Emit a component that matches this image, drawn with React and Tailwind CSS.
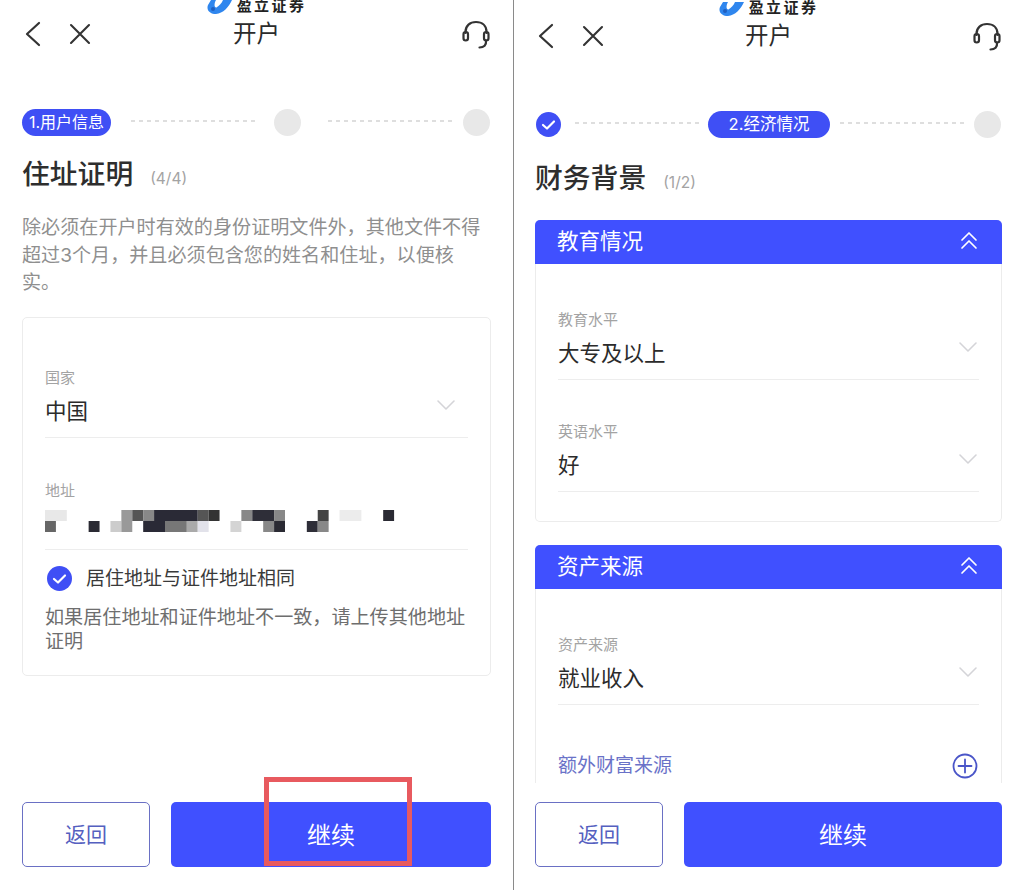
import React from 'react';

const FONT = "font-['Inter','Noto_Sans_CJK_SC',sans-serif]";

// Logo cortado por el borde superior de la captura
const Logo = ({ alto = 'h-[14px]' }) => (
  <div className={`${alto} flex items-end justify-center gap-[5px] overflow-hidden`}>
    <svg width="25" height="14" viewBox="0 0 25 14" className="shrink-0">
      <path d="M4 0 L1 5 C-1 10 3 14.5 9 14 C16 13.5 22 7 25 0 Z" fill="#2f86ee" />
      <path d="M9 0 L16 0 C15 3 12 6 9.5 7.5 C7 8 7 3 9 0 Z" fill="#fff" />
      <circle cx="6" cy="9" r="2" fill="#1f5fc0" />
    </svg>
    <span className="text-[15px] leading-[15px] font-semibold tracking-[2.4px] text-[#222] -translate-y-[1px]">盈立证券</span>
  </div>
);

const Header = () => (
  <div className="h-[40px] flex items-center justify-between px-[22px] relative">
    <div className="flex items-center gap-[24px]">
      <svg width="22" height="28" viewBox="0 0 22 28" fill="none" stroke="#333" strokeWidth="2.2" strokeLinecap="round" strokeLinejoin="round">
        <path d="M17 3 L5 14 L17 25" />
      </svg>
      <svg width="24" height="24" viewBox="0 0 24 24" fill="none" stroke="#333" strokeWidth="2.1" strokeLinecap="round">
        <path d="M3 3 L21 21 M21 3 L3 21" />
      </svg>
    </div>
    <span className="text-[23.5px] text-[#2b2b2b] absolute left-0 right-0 text-center pointer-events-none">开户</span>
    <svg width="30" height="30" viewBox="0 0 30 30" fill="none" stroke="#333" strokeWidth="2.2" strokeLinecap="round" className="translate-y-[1px]">
      <path d="M4.5 13 V12 C4.5 5.5 9 2 15 2 C21 2 25.5 5.5 25.5 12 V13" />
      <rect x="2.5" y="12" width="4.5" height="8.5" rx="2.2" />
      <rect x="23" y="12" width="4.5" height="8.5" rx="2.2" />
      <path d="M25 20.5 C25.5 25 23 27.5 18.5 27.5" />
    </svg>
  </div>
);

const Dots = ({ ancho }) => (
  <div className={`h-[2px] bg-[repeating-linear-gradient(90deg,#dedede_0_4px,transparent_4px_8px)] self-start mt-[11px] ${ancho}`} />
);

const CheckCircle = ({ clase = '' }) => (
  <svg viewBox="0 0 25 25" className={`w-[25px] h-[25px] shrink-0 ${clase}`}>
    <circle cx="12.5" cy="12.5" r="12.5" fill="#3f4ff5" />
    <path d="M7 13 L11 16.5 L18 9.5" fill="none" stroke="#fff" strokeWidth="2.2" strokeLinecap="round" strokeLinejoin="round" />
  </svg>
);

const Chevron = () => (
  <svg width="20" height="12" viewBox="0 0 20 12" fill="none" stroke="#d4d4d8" strokeWidth="1.6" strokeLinecap="round" strokeLinejoin="round">
    <path d="M2 2 L10 10 L18 2" />
  </svg>
);

const DoubleUp = () => (
  <svg width="18" height="20" viewBox="0 0 18 20" fill="none" stroke="#fff" strokeWidth="1.7" strokeLinecap="round" strokeLinejoin="round">
    <path d="M2 9 L9 2 L16 9 M2 17 L9 10 L16 17" />
  </svg>
);

const Campo = ({ label, value, mt = 'mt-0', derecha = 'right-[1px]' }) => (
  <div className={`${mt} border-b border-[#ededed] h-[71px] flex flex-col relative`}>
    <span className="text-[15px] leading-[20px] text-[#a3a3a3] mt-[1px]">{label}</span>
    <span className="text-[21.5px] leading-[30px] text-[#2b2b2b] mt-[8px]">{value}</span>
    <div className={`absolute top-[32px] ${derecha}`}><Chevron /></div>
  </div>
);

const Titulo = ({ texto, paso, mt }) => (
  <div className={`flex items-baseline gap-[17px] ${mt}`}>
    <h1 className="text-[27.8px] leading-[38px] font-medium text-[#2e2e2e]">{texto}</h1>
    <span className="text-[15.5px] text-[#a3a3a3]">{paso}</span>
  </div>
);

const Footer = () => (
  <div className="h-[65px] shrink-0 flex gap-[21px] px-[22px]">
    <button className="w-[128px] rounded-[5px] border border-[#6a70c4] bg-white text-[21px] text-[#5560c0]">返回</button>
    <button className="flex-1 rounded-[5px] bg-[#4050ff] pt-[2px] text-[24px] text-white">继续</button>
  </div>
);

// Dirección pixelada: es una mancha, no texto
const Pixelado = () => {
  const celdas = [
    [0, 0, 2, '#e8e8e8'], [7, 0, 1, '#999'], [8, 0, 1, '#555'], [9, 0, 1, '#888'], [10, 0, 4, '#2a2a36'],
    [14, 0, 1, '#555'], [15, 0, 1, '#333'], [18, 0, 1, '#888'], [19, 0, 2, '#2e2e38'], [21, 0, 1, '#888'],
    [25, 0, 1, '#444'], [27, 0, 2, '#ececec'], [31, 0, 1, '#2a2a33'],
    [0, 1, 1, '#666'], [4, 1, 1, '#2a2a33'], [6, 1, 1, '#ccc'], [7, 1, 1, '#999'], [9, 1, 2, '#2a2a36'],
    [11, 1, 2, '#777'], [13, 1, 1, '#aaa'], [14, 1, 1, '#e2e2ea'], [17, 1, 1, '#d4d4d4'], [20, 1, 1, '#888'],
    [21, 1, 1, '#2a2a33'], [24, 1, 1, '#2e2e38'], [25, 1, 1, '#888'],
  ];
  return (
    <svg width="360" height="22" viewBox="0 0 33 2" preserveAspectRatio="none">
      {celdas.map(([x, y, w, c], i) => (
        <rect key={i} x={x} y={y} width={w} height={1} fill={c} />
      ))}
    </svg>
  );
};

const PanelIzquierdo = () => (
  <div className="w-[513px] h-[890px] flex flex-col overflow-hidden shrink-0">
    <Logo />
    <Header />
    <div className="px-[22px] mt-[55px] flex items-center">
      <span className="w-[89px] h-[27px] rounded-full bg-[#3f4ff5] text-white text-[16px] leading-[27px] text-center">1.用户信息</span>
      <Dots ancho="w-[124px] ml-[20px]" />
      <span className="w-[27px] h-[27px] rounded-full bg-[#e8e8e8] ml-[19px]" />
      <Dots ancho="w-[124px] ml-[27px]" />
      <span className="w-[27px] h-[27px] rounded-full bg-[#e8e8e8] ml-[11px]" />
    </div>
    <div className="px-[22px] flex-1">
      <Titulo texto="住址证明" paso="(4/4)" mt="mt-[19px]" />
      <p className="mt-[21px] text-[19.1px] leading-[27.5px] text-[#8f8f8f]">
        除必须在开户时有效的身份证明文件外，其他文件不得<br />
        超过3个月，并且必须包含您的姓名和住址，以便核<br />
        实。
      </p>
      <div className="mt-[20px] h-[359px] rounded-[5px] border border-[#ececec] px-[22px] pt-[49px]">
        <Campo label="国家" value="中国" derecha="right-[12px]" />
        <div className="mt-[43px] border-b border-[#ededed] h-[69px]">
          <span className="block text-[15px] leading-[20px] text-[#a3a3a3]">地址</span>
          <div className="mt-[9px]"><Pixelado /></div>
        </div>
        <div className="flex items-center gap-[14px] mt-[16px] ml-[2px]">
          <CheckCircle />
          <span className="text-[19px] leading-[26px] text-[#3a3a3a]">居住地址与证件地址相同</span>
        </div>
        <p className="mt-[13px] text-[19.1px] leading-[24px] text-[#6e6e6e]">如果居住地址和证件地址不一致，请上传其他地址证明</p>
      </div>
    </div>
    <Footer />
    <div className="h-[23px] shrink-0" />
  </div>
);

const Seccion = ({ titulo, children, clase }) => (
  <div className={`rounded-[5px] border border-t-0 border-[#ececec] ${clase}`}>
    <div className="-mx-px h-[44px] rounded-t-[5px] bg-[#4050ff] flex items-center justify-between pl-[22px] pr-[24px]">
      <span className="text-[21.5px] text-white pb-[2px]">{titulo}</span>
      <div className="pb-[3px]"><DoubleUp /></div>
    </div>
    <div className="px-[22px]">{children}</div>
  </div>
);

const PanelDerecho = () => (
  <div className="flex-1 -ml-px h-[890px] flex flex-col overflow-hidden">
    <Logo alto="h-[16px]" />
    <Header />
    <div className="px-[22px] mt-[55px] flex items-center">
      <CheckCircle clase="ml-px" />
      <Dots ancho="w-[124px] ml-[14px]" />
      <span className="w-[122px] h-[27px] rounded-full bg-[#3f4ff5] text-white text-[16.5px] leading-[27px] text-center ml-[9px]">2.经济情况</span>
      <Dots ancho="w-[124px] ml-[10px]" />
      <span className="w-[27px] h-[27px] rounded-full bg-[#e8e8e8] ml-[10px]" />
    </div>
    <div className="px-[22px] flex-1 overflow-hidden">
      <Titulo texto="财务背景" paso="(1/2)" mt="mt-[21px]" />
      <Seccion titulo="教育情况" clase="mt-[23px] h-[302px]">
        <div className="pt-[45px]">
          <Campo label="教育水平" value="大专及以上" />
          <Campo label="英语水平" value="好" mt="mt-[41px]" />
        </div>
      </Seccion>
      <Seccion titulo="资产来源" clase="mt-[23px] h-[238px] border-b-0 rounded-b-none">
        <div className="pt-[45px]">
          <Campo label="资产来源" value="就业收入" />
          <div className="flex items-center justify-between mt-[48px] pr-[1px]">
            <span className="text-[19px] leading-[26px] text-[#6a72c8]">额外财富来源</span>
            <svg width="26" height="26" viewBox="0 0 26 26" fill="none" stroke="#4a55c8" strokeWidth="1.8" strokeLinecap="round">
              <circle cx="13" cy="13" r="11.5" />
              <path d="M13 6.5 V19.5 M6.5 13 H19.5" />
            </svg>
          </div>
        </div>
      </Seccion>
    </div>
    <Footer />
    <div className="h-[23px] shrink-0" />
  </div>
);

const App = () => (
  <div className={`w-[1024px] h-[890px] bg-white flex relative overflow-hidden ${FONT}`}>
    <PanelIzquierdo />
    <div className="w-px h-full bg-[#8a8a8a] shrink-0" />
    <PanelDerecho />
    {/* Recuadro rojo de anotación encima de la captura */}
    <div className="absolute left-[264px] top-[777px] w-[148px] h-[89px] border-[5px] border-[#e85a5f]" />
  </div>
);

export default App;
